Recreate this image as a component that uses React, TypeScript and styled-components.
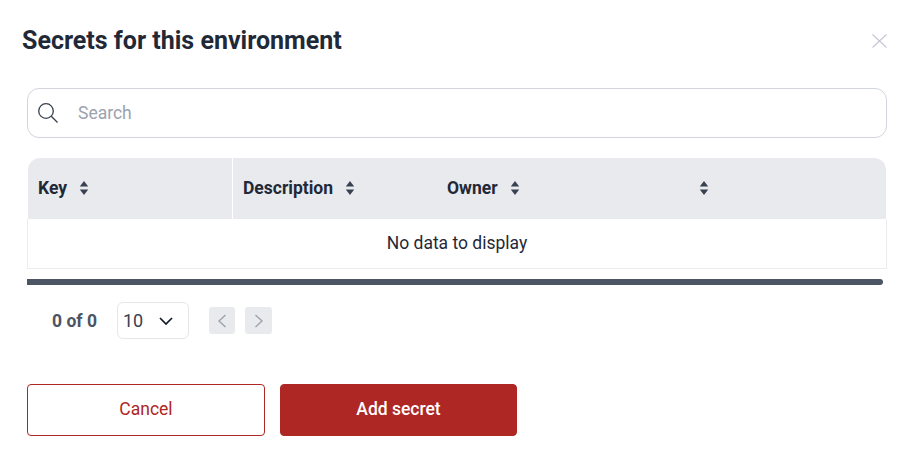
import styled, { createGlobalStyle } from "styled-components";

const GlobalStyle = createGlobalStyle`
  html, body {
    margin: 0;
    padding: 0;
    background: #fff;
    font-family: Roboto, "Liberation Sans", sans-serif;
  }
  * {
    box-sizing: border-box;
  }
`;

const Modal = styled.div`
  width: 914px;
  height: 463px;
  padding: 0 27px;
  overflow: hidden;
`;

const Header = styled.div`
  display: flex;
  align-items: center;
  justify-content: space-between;
  height: 88px;
  padding-bottom: 7px;
  margin-left: -5px;
`;

const Title = styled.h2`
  margin: 0;
  font-size: 25px;
  line-height: 32px;
  font-weight: 700;
  color: #1f2937;
`;

const CloseButton = styled.button`
  display: flex;
  padding: 0;
  border: 0;
  background: none;
  color: #c2c7d2;
`;

const SearchBox = styled.div`
  display: flex;
  align-items: center;
  gap: 20px;
  height: 50px;
  padding-left: 10px;
  border: 1px solid #d1d5db;
  border-radius: 12px;
  color: #374151;
`;

const SearchText = styled.span`
  font-size: 17.5px;
  color: #9ca3af;
`;

const Table = styled.div`
  margin-top: 20px;
`;

const HeadRow = styled.div`
  display: grid;
  grid-template-columns: 205px 204px 1fr;
  height: 61px;
  margin: 0 1px;
  background: #e9eaee;
  border-radius: 12px 12px 0 0;
`;

const HeadCell = styled.div<{ $divider?: boolean }>`
  display: flex;
  align-items: center;
  padding-left: 10px;
  padding-bottom: 1px;
  border-right: ${(p) => (p.$divider ? "1px solid #fff" : "0")};
  font-size: 17.5px;
  font-weight: 700;
  color: #1f2937;
`;

const HeadLabel = styled.span<{ $width: number }>`
  width: ${(p) => p.$width}px;
`;

const Sort = styled.svg`
  display: block;
  width: 10px;
  height: 16px;
  color: #374151;
`;

const SortGap = styled.div`
  width: 179px;
`;

const EmptyRow = styled.div`
  display: flex;
  align-items: center;
  justify-content: center;
  height: 50px;
  padding-bottom: 2px;
  border: 1px solid #ebecef;
  border-top: 0;
  font-size: 17.5px;
  color: #1f2937;
`;

const Scrollbar = styled.div`
  width: 856px;
  height: 6px;
  margin-top: 10px;
  background: #4b5563;
  border-radius: 0 3px 3px 0;
`;

const Pagination = styled.div`
  display: flex;
  align-items: center;
  height: 37px;
  margin-top: 17px;
  padding-left: 25px;
`;

const PageCount = styled.span`
  width: 65px;
  font-size: 17.5px;
  font-weight: 700;
  color: #4b5563;
`;

const PageSize = styled.div`
  display: flex;
  align-items: center;
  justify-content: space-between;
  width: 72px;
  height: 37px;
  padding: 0 15px 0 5px;
  border: 1px solid #e5e7eb;
  border-radius: 6px;
  font-size: 18px;
  color: #374151;
`;

const PageButton = styled.button<{ $first?: boolean }>`
  display: flex;
  align-items: center;
  justify-content: center;
  width: ${(p) => (p.$first ? "26px" : "27px")};
  height: 27px;
  margin-left: ${(p) => (p.$first ? "20px" : "10px")};
  padding: 0;
  border: 0;
  border-radius: 3px;
  background: #e9eaee;
  color: #9ca3af;
`;

const Actions = styled.div`
  display: flex;
  gap: 15px;
  margin-top: 45px;
`;

const ActionButton = styled.button<{ $primary?: boolean }>`
  width: ${(p) => (p.$primary ? "237px" : "238px")};
  height: 52px;
  padding: 0 0 2px;
  border: 1px solid #ae2724;
  border-radius: 4px;
  background: ${(p) => (p.$primary ? "#ae2724" : "#fff")};
  color: ${(p) => (p.$primary ? "#fff" : "#ae2724")};
  font-family: inherit;
  font-size: 17.5px;
  font-weight: ${(p) => (p.$primary ? 500 : 400)};
`;

const SortIcon = () => (
  <Sort viewBox="0 0 10 16" fill="currentColor">
    <path d="M5 1 9.2 6.5H.8Z" />
    <path d="M5 15 9.2 9.5H.8Z" />
  </Sort>
);

const App = () => {
  return (
    <Modal>
      <GlobalStyle />
      <Header>
        <Title>Secrets for this environment</Title>
        <CloseButton aria-label="Close">
          <svg width="15" height="14" viewBox="0 0 15 14" fill="none" stroke="currentColor" strokeWidth="1.1">
            <path d="M.5.5 14.5 13.5M14.5.5 .5 13.5" />
          </svg>
        </CloseButton>
      </Header>

      <SearchBox>
        <svg width="20" height="20" viewBox="0 0 20 20" fill="none" stroke="currentColor" strokeWidth="1.3">
          <circle cx="8" cy="8" r="7.3" />
          <path d="M13.3 13.3 19.5 19.5" />
        </svg>
        <SearchText>Search</SearchText>
      </SearchBox>

      <Table>
        <HeadRow>
          <HeadCell $divider>
            <HeadLabel $width={41}>Key</HeadLabel>
            <SortIcon />
          </HeadCell>
          <HeadCell>
            <HeadLabel $width={102}>Description</HeadLabel>
            <SortIcon />
          </HeadCell>
          <HeadCell>
            <HeadLabel $width={63}>Owner</HeadLabel>
            <SortIcon />
            <SortGap />
            <SortIcon />
          </HeadCell>
        </HeadRow>
        <EmptyRow>No data to display</EmptyRow>
      </Table>
      <Scrollbar />

      <Pagination>
        <PageCount>0 of 0</PageCount>
        <PageSize>
          10
          <svg width="14" height="8" viewBox="0 0 14 8" fill="none" stroke="#111827" strokeWidth="1.7">
            <path d="M1 1 7 7 13 1" />
          </svg>
        </PageSize>
        <PageButton $first aria-label="Previous">
          <svg width="8" height="14" viewBox="0 0 8 14" fill="none" stroke="currentColor" strokeWidth="1.4">
            <path d="M7.5 1 1 7 7.5 13" />
          </svg>
        </PageButton>
        <PageButton aria-label="Next">
          <svg width="8" height="14" viewBox="0 0 8 14" fill="none" stroke="currentColor" strokeWidth="1.4">
            <path d="M.5 1 7 7 .5 13" />
          </svg>
        </PageButton>
      </Pagination>

      <Actions>
        <ActionButton>Cancel</ActionButton>
        <ActionButton $primary>Add secret</ActionButton>
      </Actions>
    </Modal>
  );
};

export default App;
